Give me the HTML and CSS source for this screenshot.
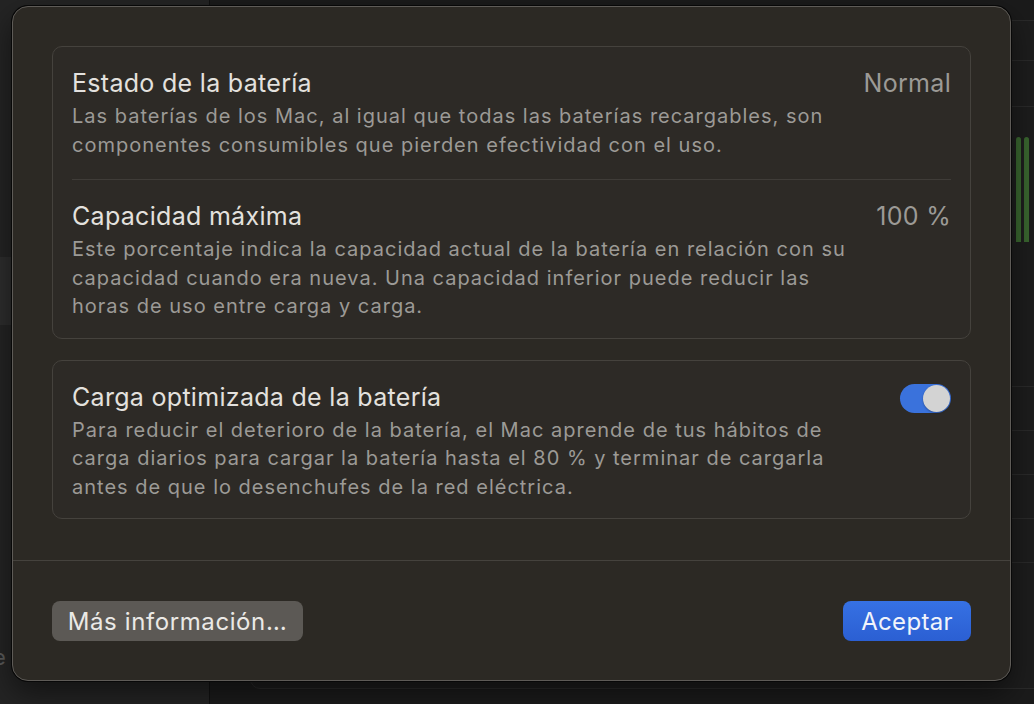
FILE: index.html
```html
<!DOCTYPE html>
<html lang="es">
<head>
    <meta charset="UTF-8">
    <meta name="viewport" content="width=device-width, initial-scale=1.0">
    <title>Estado de la batería</title>
    <link rel="stylesheet" href="styles.css">
</head>
<body>
    <div class="window">
        <div class="sidebar">
            <div class="side-item selected"></div>
            <div class="side-cut"><span>e</span></div>
        </div>
        <div class="main">
            <div class="panel">
                <div class="panel-row" style="height: 40px"></div>
                <div class="panel-row" style="height: 46px"></div>
                <div class="panel-row meter-row" style="height: 280px">
                    <div class="meter"></div>
                    <div class="meter"></div>
                </div>
                <div class="panel-row" style="height: 44px"></div>
                <div class="panel-row" style="height: 44px"></div>
                <div class="panel-row" style="height: 44px"></div>
                <div class="panel-row" style="height: 44px"></div>
            </div>
        </div>
    </div>

    <div class="sheet">
        <div class="sheet-body">
            <div class="card">
                <div class="row">
                    <div class="row-text">
                        <div class="row-title">Estado de la batería</div>
                        <div class="row-desc">Las baterías de los Mac, al igual que todas las baterías recargables, son componentes consumibles que pierden efectividad con el uso.</div>
                    </div>
                    <div class="row-value">Normal</div>
                </div>
                <div class="row">
                    <div class="row-text">
                        <div class="row-title">Capacidad máxima</div>
                        <div class="row-desc">Este porcentaje indica la capacidad actual de la batería en relación con su capacidad cuando era nueva. Una capacidad inferior puede reducir las horas de uso entre carga y carga.</div>
                    </div>
                    <div class="row-value">100 %</div>
                </div>
            </div>

            <div class="card">
                <div class="row">
                    <div class="row-text">
                        <div class="row-title">Carga optimizada de la batería</div>
                        <div class="row-desc">Para reducir el deterioro de la batería, el Mac aprende de tus hábitos de carga diarios para cargar la batería hasta el 80 % y terminar de cargarla antes de que lo desenchufes de la red eléctrica.</div>
                    </div>
                    <div class="toggle on"><div class="knob"></div></div>
                </div>
            </div>
        </div>

        <div class="sheet-foot">
            <button class="btn">Más información…</button>
            <button class="btn primary">Aceptar</button>
        </div>
    </div>
</body>
</html>
```
FILE: styles.css
```css
* {
    box-sizing: border-box;
}
body {
    margin: 0;
    width: 1034px;
    height: 704px;
    overflow: hidden;
    position: relative;
    background: #1b1b1b;
    font-family: Inter, "Noto Sans", sans-serif;
}

/* window behind the sheet */
.window {
    display: flex;
    height: 704px;
}
.sidebar {
    width: 210px;
    background: #242424;
    border-right: 1px solid #111;
    padding-top: 257px;
    overflow: hidden;
}
.side-item.selected {
    height: 68px;
    background: #2d2d2d;
}
.side-cut {
    margin-top: 320px;
    font-size: 22px;
    line-height: 24px;
    color: #5a5a5a;
}
.side-cut span {
    display: inline-block;
    margin-left: -7px;
}
.main {
    flex: 1;
    padding: 20px 0 0 40px;
}
.panel {
    height: 669px;
    margin-right: -30px;
    border: 1px solid #2a2a2a;
    border-radius: 10px;
    background: #1d1d1d;
}
.panel-row {
    border-bottom: 1px solid #2a2a2a;
}
.meter-row {
    display: flex;
    justify-content: flex-end;
    gap: 3px;
    padding: 30px 34px 0 0;
}
.meter {
    width: 5px;
    height: 105px;
    border-radius: 3px 3px 0 0;
    background: #39652f;
}

/* sheet */
.sheet {
    position: absolute;
    left: 12px;
    top: 6px;
    width: 999px;
    height: 675px;
    background: #2c2924;
    border: 1px solid #5e5b57;
    border-radius: 16px;
    box-shadow: 0 0 0 1px #080808, 0 12px 30px rgba(0, 0, 0, 0.5);
    display: flex;
    flex-direction: column;
}
.sheet-body {
    flex: 1;
    padding: 39px 39px 0;
    display: flex;
    flex-direction: column;
    gap: 21px;
}
.card {
    border: 1px solid #45423d;
    border-radius: 10px;
    background: #2d2a26;
    padding: 0 19px;
}
.row {
    display: flex;
    justify-content: space-between;
    align-items: flex-start;
    gap: 16px;
    padding: 21px 0 20px;
}
.row + .row {
    border-top: 1px solid #3f3c38;
}
.row:last-child {
    padding-bottom: 17px;
}
.row-text {
    max-width: 790px;
}
.row-title {
    font-size: 25px;
    line-height: 30px;
    letter-spacing: 0.3px;
    color: #e3e1de;
}
.row-desc {
    margin-top: 4px;
    font-size: 20px;
    line-height: 28.5px;
    letter-spacing: 1px;
    color: #9c9a96;
}
.row-value {
    font-size: 25px;
    line-height: 30px;
    letter-spacing: 0.3px;
    color: #9c9a96;
    white-space: nowrap;
}

.toggle {
    flex: none;
    width: 51px;
    height: 29px;
    margin-top: 2px;
    border-radius: 15px;
    background: #3a72dc;
    padding: 1px;
    display: flex;
    justify-content: flex-end;
}
.knob {
    width: 27px;
    height: 27px;
    border-radius: 50%;
    background: #d3d3d3;
    box-shadow: 0 1px 2px rgba(0, 0, 0, 0.3);
}

.sheet-foot {
    height: 120px;
    border-top: 1px solid #45423d;
    padding: 40px 39px 0;
    display: flex;
    justify-content: space-between;
    align-items: flex-start;
}
.btn {
    width: 251px;
    height: 40px;
    padding: 0;
    border: none;
    border-radius: 8px;
    background: #5c5955;
    color: #ebe9e6;
    font-family: inherit;
    font-size: 24px;
    letter-spacing: 0.6px;
    cursor: pointer;
}
.btn.primary {
    width: 128px;
    letter-spacing: 0.3px;
    background: linear-gradient(#3671e3, #2b5fd3);
    color: #f1f4fb;
}
```
